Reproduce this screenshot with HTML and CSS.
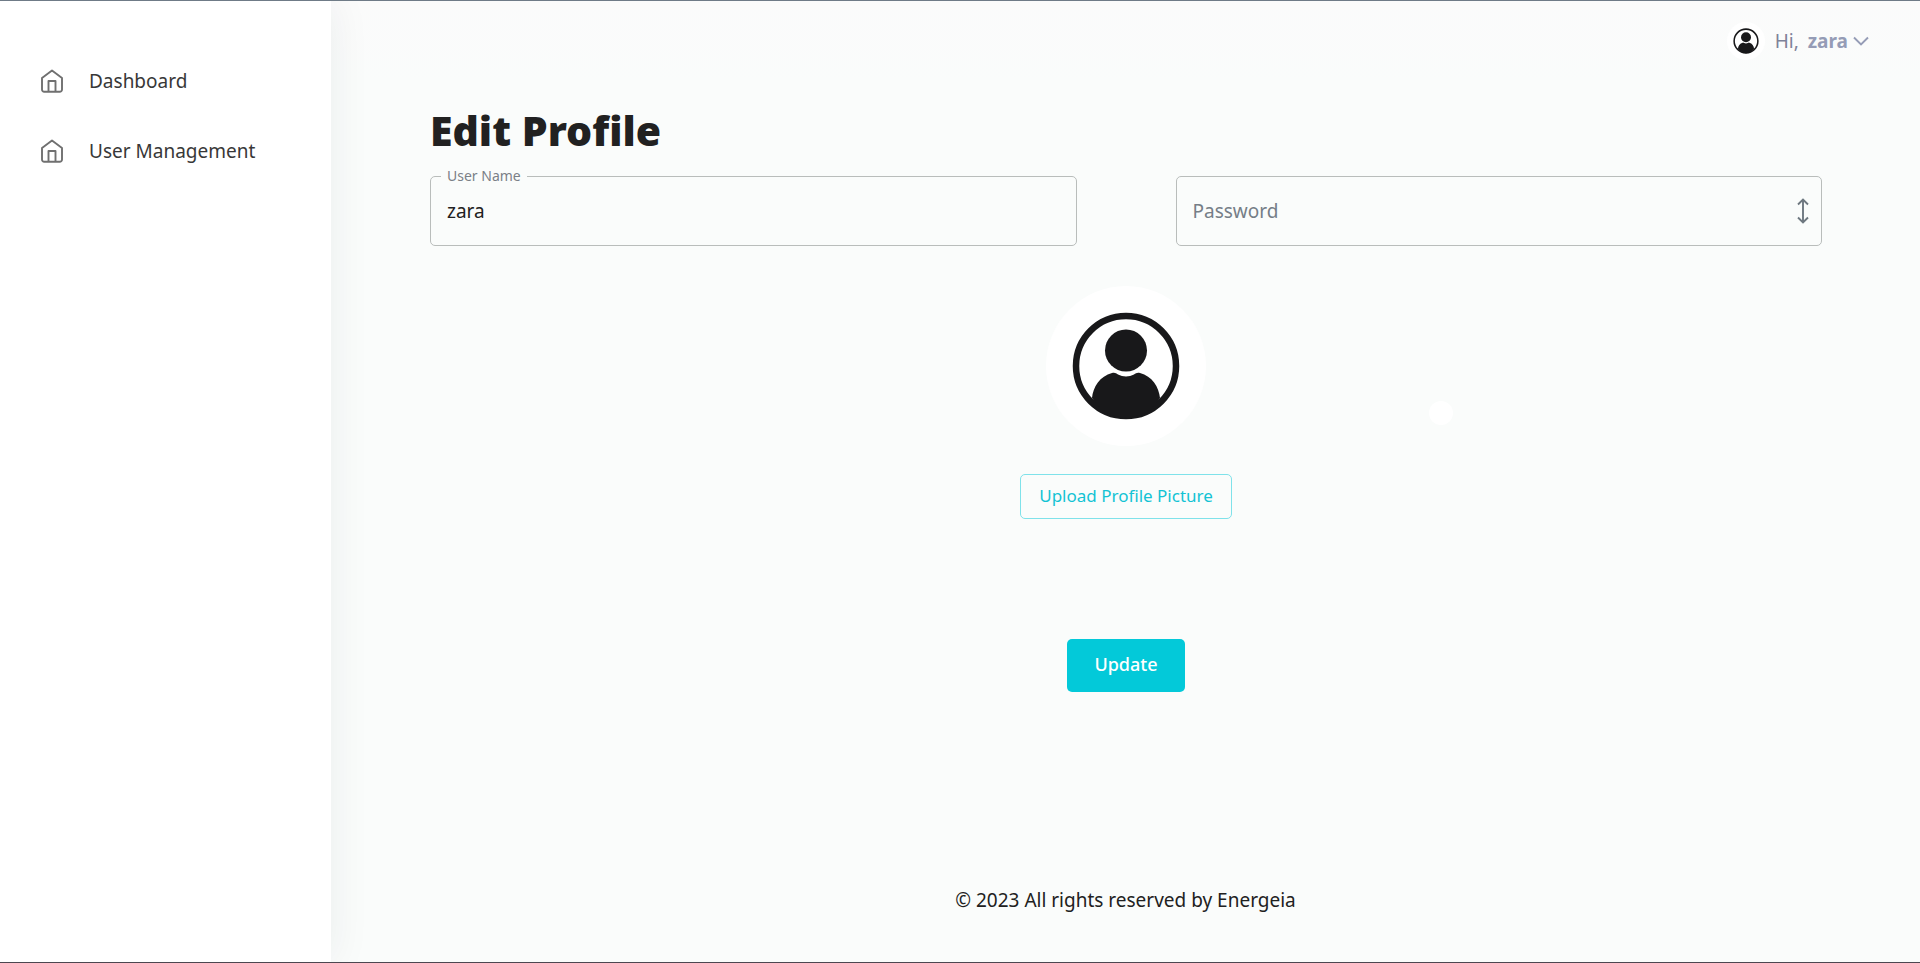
FILE: index.html
```
<!DOCTYPE html>
<html lang="en">
<head>
    <meta charset="utf-8">
    <title>Edit Profile</title>
    <link rel="stylesheet" href="styles.css">
</head>
<body>
    <!-- Shared icons -->
    <svg class="sprite" aria-hidden="true">
        <symbol id="icon-home" viewBox="0 0 24 24">
            <path d="M2 9 12 1.500 22 9V20.500a2.200 2.200 0 0 1-2.200 2.200H4.200A2.200 2.200 0 0 1 2 20.500Z M8.500 22.700V12h7v10.700" fill="none" stroke="currentColor" stroke-width="1.900" stroke-linejoin="round"/>
        </symbol>
        <symbol id="icon-avatar" viewBox="0 0 160 160">
            <circle cx="80" cy="80" r="80" fill="#fff"/>
            <circle cx="80" cy="80" r="50" fill="none" stroke="#18181a" stroke-width="6.500"/>
            <circle cx="80" cy="64.500" r="21" fill="#18181a"/>
            <path d="M46 112C47 101 54 90 66 87c3-.8 4 .3 6 1.500 5 2.500 11 2.500 16 0 2-1.200 3-2.300 6-1.500 12 3 19 14 20 25C98 138 62 138 46 112Z" fill="#18181a"/>
        </symbol>
    </svg>

    <div class="page">
        <aside class="sidebar">
            <nav>
                <a href="#" class="nav-link">
                    <svg class="nav-icon"><use href="#icon-home"/></svg>
                    Dashboard
                </a>
                <a href="#" class="nav-link">
                    <svg class="nav-icon"><use href="#icon-home"/></svg>
                    User Management
                </a>
            </nav>
        </aside>

        <div class="main">
            <header class="topbar">
                <button type="button" class="user-menu">
                    <svg class="avatar-small"><use href="#icon-avatar"/></svg>
                    <span class="hi">Hi,</span>
                    <strong>zara</strong>
                    <svg class="chevron" viewBox="0 0 16 10"><path d="M1 1.500 8 8.500 15 1.500" fill="none" stroke="currentColor" stroke-width="1.900"/></svg>
                </button>
            </header>

            <main class="content">
                <h1>Edit Profile</h1>
                <form class="profile-form">
                    <div class="fields">
                        <div class="field">
                            <label for="username">User Name</label>
                            <input type="text" id="username" value="zara">
                        </div>
                        <div class="field">
                            <input type="password" id="password" placeholder="Password" aria-label="Password">
                            <svg class="resize" viewBox="0 0 12 26"><path d="M6 1.500V24.500M1 6.500 6 1.500 11 6.500M1 19.500 6 24.500 11 19.500" fill="none" stroke="currentColor" stroke-width="1.900"/></svg>
                        </div>
                    </div>

                    <div class="picture">
                        <svg class="avatar"><use href="#icon-avatar"/></svg>
                        <button type="button" class="upload">Upload Profile Picture</button>
                    </div>

                    <button type="submit" class="update">Update</button>
                    <span class="dot"></span>
                </form>
            </main>

            <footer>© 2023 All rights reserved by Energeia</footer>
        </div>
    </div>
</body>
</html>
```
FILE: styles.css
```
* {
    box-sizing: border-box;
}
body {
    margin: 0;
    background-color: #fafcfb;
    color: #212121;
    font-family: "Noto Sans", sans-serif;
    font-size: 19px;
}
button, input {
    font-family: inherit;
}
.sprite {
    position: absolute;
    width: 0;
    height: 0;
}
.page {
    display: flex;
    min-height: 100vh;
    border-top: 1px solid #6f7b87;
    border-bottom: 1px solid #4c4750;
    overflow: hidden;
}

/* Sidebar */
.sidebar {
    flex: 0 0 331px;
    padding: 45px 40px;
    background: #fff;
    box-shadow: 0 0 40px rgba(30, 40, 60, 0.07);
    z-index: 1;
}
.nav-link {
    display: flex;
    align-items: center;
    gap: 25px;
    height: 70px;
    color: #383838;
    text-decoration: none;
}
.nav-icon {
    width: 24px;
    height: 24px;
    color: #707070;
}

/* Main column */
.main {
    flex: 1;
    display: flex;
    flex-direction: column;
}
.topbar {
    display: flex;
    justify-content: flex-end;
    align-items: center;
    height: 80px;
    padding-right: 51px;
    background: linear-gradient(#fbfbfb, #fafcfb);
}
.user-menu {
    display: flex;
    align-items: center;
    padding: 0;
    border: none;
    background: none;
    color: #959cb6;
    font-size: 19px;
    cursor: pointer;
}
.avatar-small {
    width: 38px;
    height: 38px;
    margin-right: 10px;
}
.hi {
    margin-right: 9px;
    color: #7e8299;
}
.chevron {
    width: 16px;
    height: 10px;
    margin-left: 5px;
}
.content {
    flex: 1;
    padding: 19px 98px 0 99px;
}
h1 {
    margin: 0 0 16px;
    font-size: 41px;
    line-height: 60px;
    font-weight: 900;
}

/* Form */
.profile-form {
    position: relative;
    display: flex;
    flex-direction: column;
    align-items: center;
}
.fields {
    display: grid;
    grid-template-columns: 1fr 1fr;
    gap: 99px;
    width: 100%;
}
.field {
    position: relative;
}
.field label {
    position: absolute;
    top: -10px;
    left: 11px;
    padding: 0 6px;
    background: #fafcfb;
    color: #7b8087;
    font-size: 14px;
    line-height: 20px;
}
.field input {
    display: block;
    width: 100%;
    height: 70px;
    padding: 0 16px;
    border: 1px solid #b9bdbb;
    border-radius: 5px;
    background: transparent;
    color: #212121;
    font-size: 19px;
}
.field input::placeholder {
    color: #757e87;
    opacity: 1;
}
.resize {
    position: absolute;
    top: 22px;
    right: 13px;
    width: 12px;
    height: 26px;
    color: #6e7880;
}
.picture {
    display: flex;
    flex-direction: column;
    align-items: center;
    gap: 28px;
    margin-top: 40px;
}
.avatar {
    width: 160px;
    height: 160px;
}
.upload {
    height: 45px;
    padding: 0 18px 3px;
    border: 1px solid #7fe2ea;
    border-radius: 5px;
    background: transparent;
    color: #12c3d4;
    font-size: 17px;
    cursor: pointer;
}
.update {
    height: 53px;
    margin-top: 120px;
    padding: 0 27px 3px;
    border: none;
    border-radius: 5px;
    background: #03c9d9;
    color: #fff;
    font-size: 18px;
    font-weight: 500;
    cursor: pointer;
}
.dot {
    position: absolute;
    top: 225px;
    right: 369px;
    width: 24px;
    height: 24px;
    border-radius: 50%;
    background: #fff;
}
footer {
    padding: 0 0 48px;
    line-height: 28px;
    text-align: center;
}
```
